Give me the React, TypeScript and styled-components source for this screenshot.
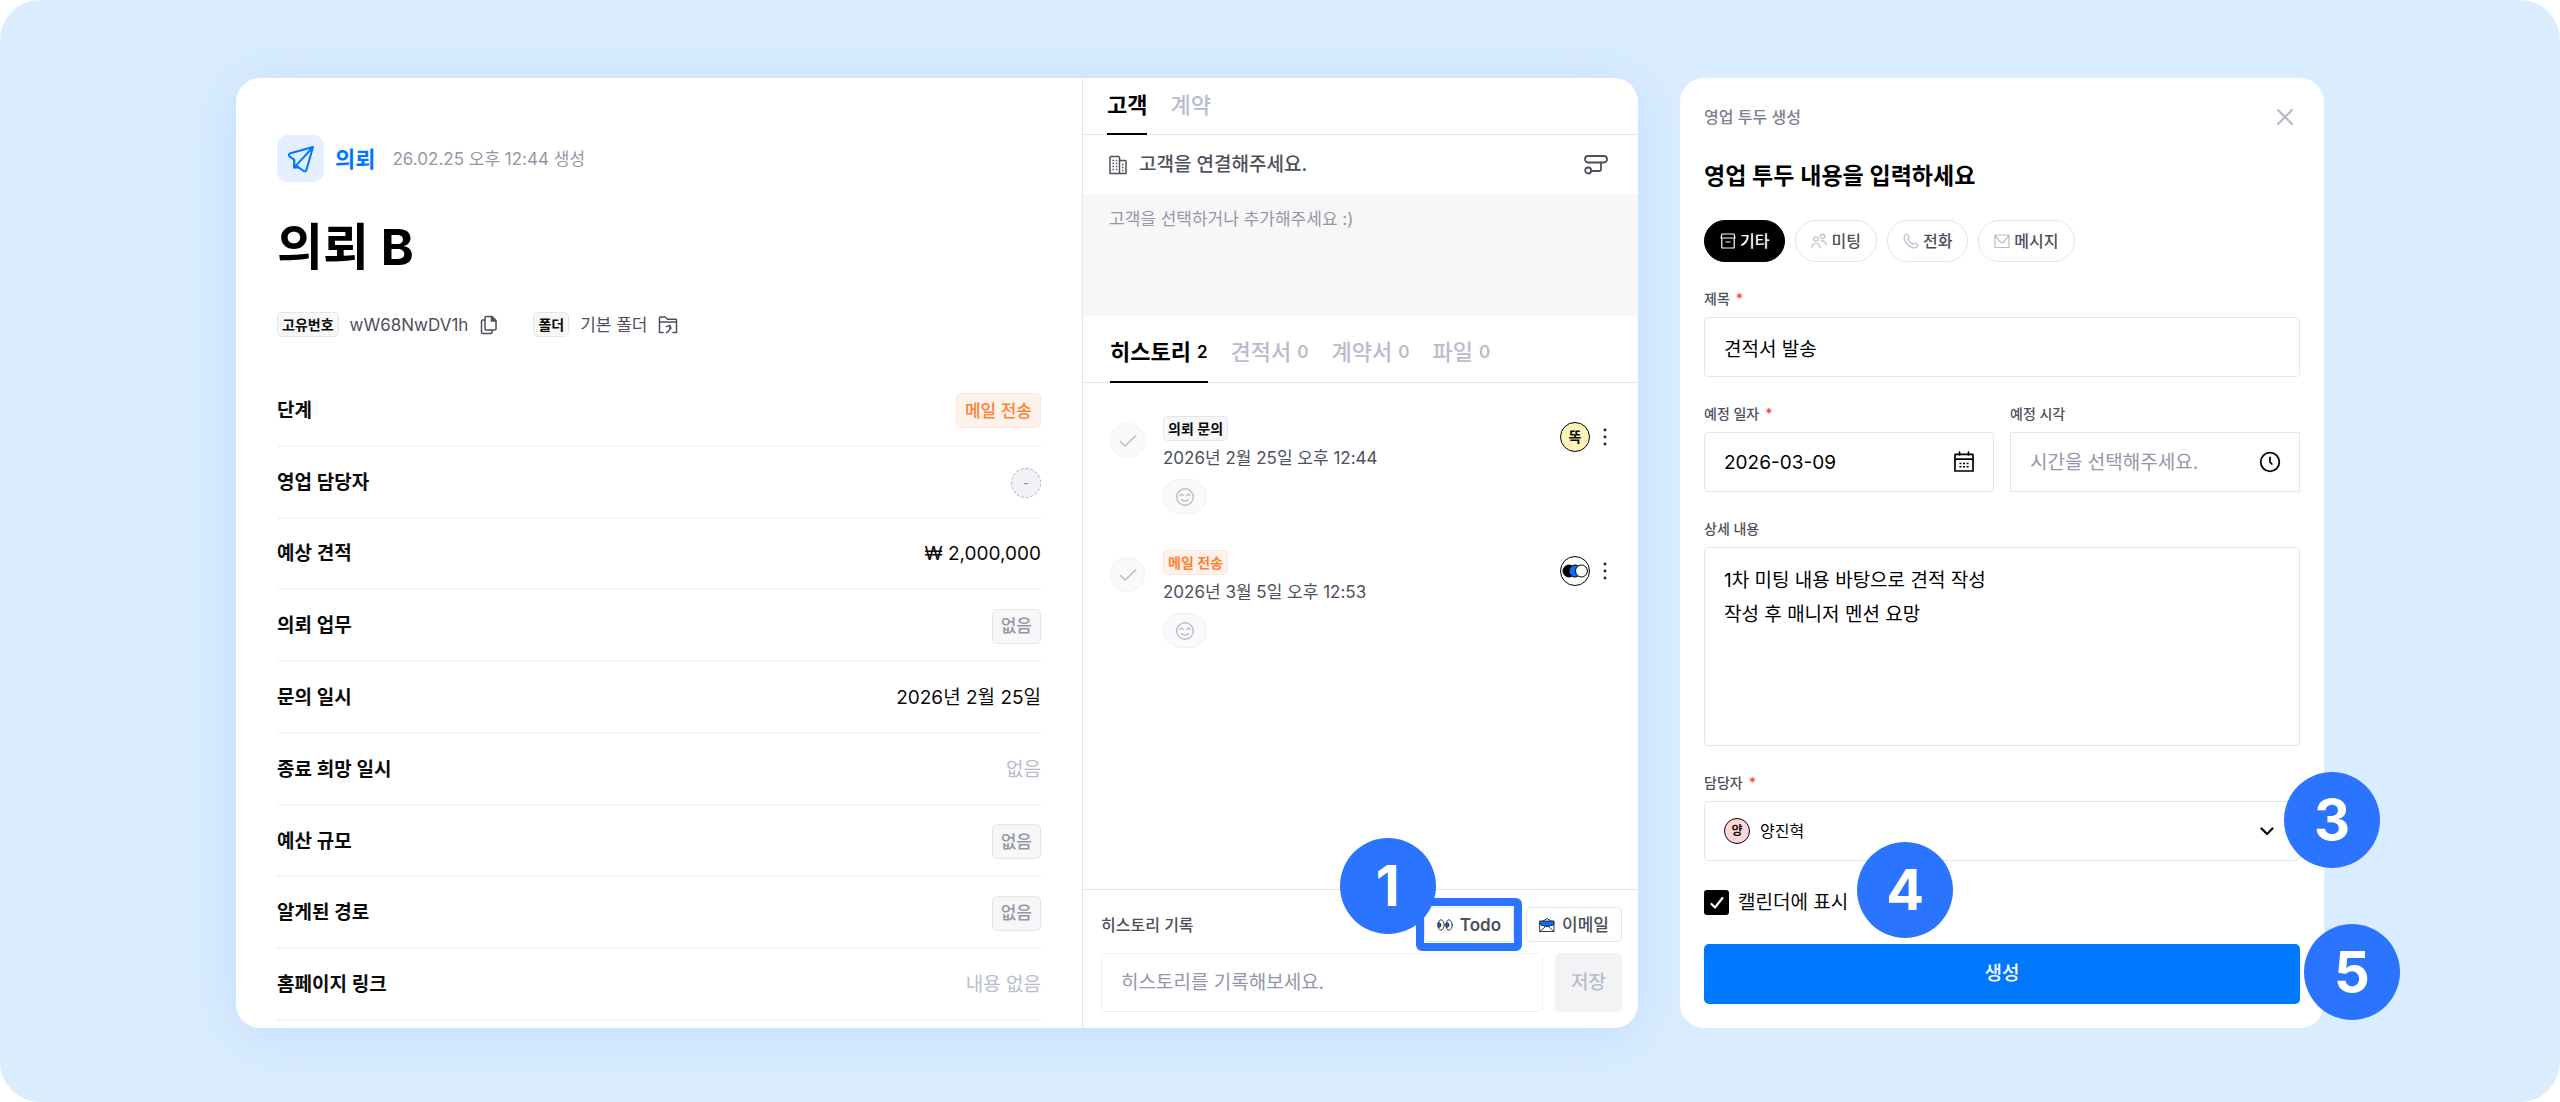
import React from "react";
import styled, { createGlobalStyle, css } from "styled-components";

const color = {
  page: "#daedff",
  badge: "#2b74ff",
  primary: "#0077ff",
  ink: "#0a0a0a",
  body: "#4d505c",
  muted: "#9397a9",
  faint: "#b9bccd",
  line: "#e5e5ef",
  hair: "#f5f5f7",
  soft: "#f7f7f7",
  red: "#ff3b45",
};

const GlobalStyle = createGlobalStyle`
  *, *::before, *::after { box-sizing: border-box; }
  body {
    margin: 0;
    background: #ffffff;
    color: ${color.ink};
    font-family: Inter, "Noto Sans CJK KR", sans-serif;
    font-size: 18px;
    line-height: 24px;
  }
  button, input, select, textarea { font: inherit; color: inherit; margin: 0; }
  button { cursor: pointer; }
  h1, h2, h3, p, dl, dt, dd, ul { margin: 0; padding: 0; }
`;

const Page = styled.div`
  min-height: 100vh;
  display: grid;
  grid-template-columns: minmax(0, 1402fr) minmax(0, 644fr);
  gap: 42px;
  padding: 78px 236px 74px;
  background: ${color.page};
  border-radius: 40px;
`;

const DetailCard = styled.main`
  display: grid;
  grid-template-columns: minmax(0, 846fr) minmax(0, 556fr);
  background: #ffffff;
  border-radius: 24px;
  box-shadow: 0 6px 56px rgba(110, 160, 255, 0.22);
`;

const icon = css`
  flex: none;
  display: block;
  fill: none;
  stroke: currentColor;
  stroke-linecap: round;
  stroke-linejoin: round;
`;

const Icon = styled.svg<{ $size: number; $stroke?: number; $color?: string }>`
  ${icon}
  width: ${(p) => p.$size}px;
  height: ${(p) => p.$size}px;
  stroke-width: ${(p) => p.$stroke ?? 1.5};
  color: ${(p) => p.$color ?? "inherit"};
`;

const IconButton = styled.button`
  display: flex;
  padding: 0;
  border: 0;
  background: none;
  color: ${color.body};
`;

/* Left panel */

const Summary = styled.section`
  display: flex;
  flex-direction: column;
  padding: 57px 41px 7px;
`;

const Kind = styled.div`
  display: flex;
  align-items: center;
  gap: 11px;
`;

const KindIcon = styled.span`
  display: grid;
  place-items: center;
  width: 47px;
  height: 47px;
  border-radius: 11px;
  background: #e5efff;
  color: ${color.primary};
`;

const KindName = styled.strong`
  font-size: 22px;
  font-weight: 600;
  color: ${color.primary};
`;

const Created = styled.span`
  margin-left: 6px;
  font-size: 17px;
  color: ${color.muted};
`;

const Title = styled.h1`
  margin-top: 30px;
  font-size: 50px;
  line-height: 70px;
  font-weight: 700;
  color: #000000;
`;

const Meta = styled.div`
  display: flex;
  align-items: center;
  margin-top: 30px;
  gap: 34px;
`;

const MetaItem = styled.div`
  display: flex;
  align-items: center;
  gap: 11px;
  font-size: 17px;
  color: ${color.body};
`;

const tones = {
  neutral: css`
    color: ${color.ink};
    background: ${color.soft};
    border-color: ${color.line};
  `,
  muted: css`
    color: ${color.muted};
    background: ${color.soft};
    border-color: ${color.line};
  `,
  orange: css`
    color: #ff8033;
    background: #fff2ea;
    border-color: #ffe5d8;
  `,
};
type Tone = keyof typeof tones;

const Tag = styled.span<{ $tone: Tone }>`
  display: inline-flex;
  align-items: center;
  height: 25px;
  padding: 0 4px;
  border: 1px solid;
  border-radius: 5px;
  font-size: 14px;
  line-height: 20px;
  font-weight: 600;
  ${(p) => tones[p.$tone]}
`;

const Chip = styled(Tag)`
  height: 35px;
  padding: 0 8px;
  font-size: 17px;
  font-weight: 500;
`;

const Fields = styled.dl`
  flex: 1;
  display: grid;
  grid-auto-rows: minmax(60px, 1fr);
  margin-top: 38px;
`;

const FieldRow = styled.div`
  display: flex;
  align-items: center;
  justify-content: space-between;
  padding-top: 2px;
  border-bottom: 2px solid ${color.hair};
  font-size: 19px;

  dt {
    font-weight: 600;
  }
`;

const Empty = styled.span`
  color: ${color.faint};
`;

const Unassigned = styled.span`
  display: grid;
  place-items: center;
  width: 30px;
  height: 30px;
  border: 1px dashed #aeb2c4;
  border-radius: 50%;
  background: #f1f2f5;
  font-size: 14px;
  color: ${color.muted};
`;

/* Middle panel */

const Side = styled.section`
  display: flex;
  flex-direction: column;
  border-left: 1px solid ${color.line};
`;

const Tabs = styled.div<{ $tall?: boolean }>`
  display: flex;
  align-items: stretch;
  gap: 23px;
  height: ${(p) => (p.$tall ? 67 : 57)}px;
  padding: 0 ${(p) => (p.$tall ? 27 : 24)}px;
  border-bottom: 1px solid ${color.line};

  button {
    padding: ${(p) => (p.$tall ? "6px 0 0" : "0 0 2px")};
  }
`;

const Tab = styled.button<{ $active?: boolean }>`
  display: flex;
  align-items: center;
  gap: 6px;
  margin-bottom: -1px;
  border: 0;
  border-bottom: 2px solid ${(p) => (p.$active ? "#000000" : "transparent")};
  background: none;
  font-size: 22px;
  font-weight: ${(p) => (p.$active ? 600 : 500)};
  color: ${(p) => (p.$active ? "#000000" : color.faint)};

  small {
    font-size: 17px;
    font-weight: 600;
  }
`;

const ClientBar = styled.div`
  display: flex;
  align-items: center;
  justify-content: space-between;
  height: 59px;
  padding: 0 30px 0 25px;
  color: ${color.body};
`;

const ClientName = styled.h2`
  display: flex;
  align-items: center;
  gap: 11px;
  font-size: 19px;
  font-weight: 500;
`;

const ClientHint = styled.p`
  min-height: 122px;
  padding: 13px 26px;
  background: ${color.soft};
  font-size: 17px;
  color: ${color.muted};
`;

const History = styled.ul`
  flex: 1;
  display: flex;
  flex-direction: column;
  gap: 36px;
  padding: 33px 26px 33px 27px;
  list-style: none;
`;

const HistoryItem = styled.li`
  display: flex;
  align-items: flex-start;
`;

const CheckButton = styled.button`
  display: grid;
  place-items: center;
  width: 35px;
  height: 35px;
  margin-top: 7px;
  padding: 0;
  border: 1px solid #f1f1f4;
  border-radius: 50%;
  background: #fafafa;
  color: ${color.faint};
`;

const HistoryBody = styled.div`
  flex: 1;
  display: flex;
  flex-direction: column;
  align-items: flex-start;
  margin-left: 18px;
`;

const HistoryDate = styled.time`
  margin-top: 5px;
  font-size: 17px;
  color: ${color.body};
`;

const ReactionButton = styled.button`
  display: grid;
  place-items: center;
  width: 44px;
  height: 35px;
  margin-top: 9px;
  padding: 0;
  border: 1px solid #f1f1f4;
  border-radius: 18px;
  background: #fafafa;
  color: ${color.faint};
`;

const Avatar = styled.span<{ $fill: string; $size: number }>`
  display: grid;
  place-items: center;
  width: ${(p) => p.$size}px;
  height: ${(p) => p.$size}px;
  border: 1px solid #000000;
  border-radius: 50%;
  background: ${(p) => p.$fill};
  font-size: ${(p) => (p.$size > 28 ? 14 : 12)}px;
  line-height: 16px;
  font-weight: 600;
  overflow: hidden;
`;

const HistoryActions = styled.div`
  display: flex;
  align-items: center;
  gap: 6px;
  margin: 6px -2px 0 0;
`;

const Composer = styled.form`
  padding: 17px 16px 16px 18px;
  border-top: 1px solid ${color.line};
`;

const ComposerHead = styled.div`
  display: flex;
  align-items: center;
  gap: 12px;

  label {
    margin-right: auto;
    font-size: 16px;
    font-weight: 500;
    color: ${color.body};
  }
`;

const TodoWrap = styled.span`
  position: relative;
  display: flex;
`;

const SmallButton = styled.button`
  display: flex;
  align-items: center;
  gap: 7px;
  height: 35px;
  padding: 0 12px;
  border: 1px solid ${color.line};
  border-radius: 5px;
  background: #ffffff;
  font-size: 17px;
  font-weight: 500;
  color: ${color.body};
`;

const TodoButton = styled(SmallButton)`
  font-weight: 600;
`;

const Highlight = styled.span`
  position: absolute;
  inset: -9px -8px;
  border: 8px solid ${color.badge};
  border-radius: 6px;
  pointer-events: none;
`;

const Step = styled.span<{ $x: string; $y: string }>`
  position: absolute;
  left: ${(p) => p.$x};
  top: ${(p) => p.$y};
  display: grid;
  place-items: center;
  width: 96px;
  height: 96px;
  border-radius: 50%;
  background: ${color.badge};
  color: #ffffff;
  font-size: 56px;
  line-height: 56px;
  font-weight: 700;
  pointer-events: none;
`;

const ComposerRow = styled.div`
  display: flex;
  gap: 12px;
  margin-top: 11px;
  font-size: 19px;

  input {
    flex: 1;
    min-width: 0;
    height: 59px;
    padding: 0 19px;
    border: 1px solid #f0f0f3;
    border-radius: 5px;
    background: #ffffff;
  }

  input::placeholder {
    color: ${color.muted};
  }

  button {
    width: 67px;
    border: 0;
    border-radius: 5px;
    background: #f2f3f5;
    font-weight: 500;
    color: ${color.faint};
  }
`;

/* Right panel */

const TodoCard = styled.form`
  display: flex;
  flex-direction: column;
  padding: 27px 24px 24px;
  background: #ffffff;
  border-radius: 24px;
`;

const TodoHeader = styled.header`
  display: flex;
  align-items: center;
  justify-content: space-between;
  padding-right: 6px;
  font-size: 16px;
  font-weight: 500;
  color: #7c8091;
`;

const TodoTitle = styled.h2`
  margin-top: 30px;
  font-size: 23px;
  line-height: 34px;
  font-weight: 600;
  color: #000000;
`;

const Kinds = styled.div`
  display: flex;
  gap: 10px;
  margin-top: 27px;
`;

const KindChip = styled.button<{ $active?: boolean }>`
  display: flex;
  align-items: center;
  gap: 4px;
  height: 42px;
  padding: 0 15px;
  border: 1px solid ${(p) => (p.$active ? "#000000" : color.line)};
  border-radius: 21px;
  background: ${(p) => (p.$active ? "#000000" : "#ffffff")};
  font-size: 16px;
  font-weight: 500;
  color: ${(p) => (p.$active ? "#ffffff" : color.body)};

  svg {
    color: ${(p) => (p.$active ? "#ffffff" : color.faint)};
  }
`;

const Field = styled.div<{ $grow?: boolean }>`
  display: flex;
  flex-direction: column;
  ${(p) => p.$grow && "flex: 1;"}
  margin-top: 27px;

  label {
    margin-bottom: 8px;
    font-size: 14px;
    line-height: 20px;
    font-weight: 500;
    color: ${color.body};
  }

  em {
    margin-left: 6px;
    font-style: normal;
    color: ${color.red};
  }
`;

const Columns = styled.div`
  display: grid;
  grid-template-columns: 1fr 1fr;
  gap: 16px;
`;

const box = css`
  width: 100%;
  padding: 0 19px;
  border: 1px solid ${color.line};
  border-radius: 4px;
  background: #ffffff;
  font-size: 19px;
  color: #000000;
  outline: 0;
`;

const TextInput = styled.input<{ $square?: boolean }>`
  ${box}
  height: 60px;
  ${(p) => p.$square && "border-radius: 0;"}

  &::placeholder {
    color: ${color.muted};
    opacity: 1;
  }
`;

const TextArea = styled.textarea`
  ${box}
  flex: 1;
  min-height: 120px;
  padding: 16px 19px;
  line-height: 34px;
  resize: none;
`;

const Select = styled.select`
  ${box}
  height: 60px;
  padding-left: 55px;
  font-size: 16px;
  appearance: none;
`;

const Adorned = styled.div`
  position: relative;
`;

const Lead = styled.span`
  position: absolute;
  left: 20px;
  top: 0;
  bottom: 0;
  display: flex;
  align-items: center;
  pointer-events: none;
`;

const Trail = styled.span`
  position: absolute;
  right: 19px;
  top: 0;
  bottom: 0;
  display: flex;
  align-items: center;
  pointer-events: none;
`;

const CheckRow = styled.div`
  position: relative;
  align-self: flex-start;
  display: flex;
  align-items: center;
  gap: 9px;
  margin: 29px 0;

  input {
    flex: none;
    appearance: none;
    width: 25px;
    height: 25px;
    border-radius: 3px;
    background: #000000;
  }

  svg {
    position: absolute;
    left: 3px;
    pointer-events: none;
  }

  label {
    font-size: 19px;
    line-height: 25px;
  }
`;

const SubmitWrap = styled.div`
  position: relative;
`;

const Submit = styled.button`
  width: 100%;
  height: 60px;
  border: 0;
  border-radius: 5px;
  background: ${color.primary};
  font-size: 19px;
  font-weight: 500;
  color: #ffffff;
`;

/* Drawings */

const SendIcon = () => (
  <Icon viewBox="0 0 30 30" $size={30} $stroke={2}>
    <path d="M27 3 L4.5 9.2 Q1.6 10.3 3.7 12.6 L8.2 15.8 V23.6 L10.6 22 L17.4 26.8 Q19.6 28.2 20.5 25.6 L27 3 L8.4 23.4" />
    <path d="M8.2 15.8 V23.6 H13" />
  </Icon>
);

const CopyIcon = () => (
  <Icon viewBox="0 0 18 20" $size={20}>
    <path d="M6 1.5 H12 L16 5.5 V14 Q16 15 15 15 H6 Q5 15 5 14 V2.5 Q5 1.5 6 1.5 Z" />
    <path d="M11.5 1.5 V6 H16 Z" fill="currentColor" />
    <path d="M4.5 5 H2.5 Q1.5 5 1.5 6 V17.5 Q1.5 18.5 2.5 18.5 H11 Q12 18.5 12 17.5 V15.5" />
  </Icon>
);

const FolderIcon = () => (
  <Icon viewBox="0 0 20 20" $size={20}>
    <path d="M5 17.5 H1.5 V2.8 Q1.5 2 2.3 2 H7.2 L9.6 4.2 H17.6 Q18.5 4.2 18.5 5 V17.5 H15" />
    <path d="M1.5 7 H18.5" />
    <path d="M8.5 17.5 C11.5 16.5 12.5 14 11.8 10.5 M8.4 11.6 L11.8 10.4 L13 13.4" />
  </Icon>
);

const BuildingIcon = () => (
  <Icon viewBox="0 0 20 20" $size={20}>
    <path d="M2 18.5 V2.5 Q2 1.5 3 1.5 H10 Q11 1.5 11.5 2.5 V18.5 Z M11.5 5.5 H17 Q18 5.5 18 6.5 V18.5 H11.5" />
    <path strokeDasharray="1.5 1.8" strokeLinecap="butt" d="M4.5 5.5 H10 M4.5 8.5 H10 M4.5 11.5 H10 M4.5 14.5 H10 M14 9.5 H17 M14 12.5 H17 M14 15.5 H17" />
  </Icon>
);

const FlowIcon = () => (
  <Icon viewBox="0 0 24 24" $size={24} $stroke={1.8}>
    <rect x="1" y="3" width="22" height="6.5" rx="3.2" />
    <circle cx="4.2" cy="17.5" r="3" />
    <path d="M7.2 18 H15.5 Q17 18 17 16.5 V9.5" />
  </Icon>
);

const CheckIcon = () => (
  <Icon viewBox="0 0 20 20" $size={20} $stroke={1.6}>
    <path d="M2.5 10.5 L7 15 L17.5 5" />
  </Icon>
);

const SmileIcon = () => (
  <Icon viewBox="0 0 20 20" $size={20} $stroke={1.4}>
    <circle cx="10" cy="10" r="8.3" />
    <path d="M4.8 8.6 Q6.5 6 8.2 8.6 M11.8 8.6 Q13.5 6 15.2 8.6 M6.5 12.6 Q10 15.4 13.5 12.6" />
  </Icon>
);

const DotsIcon = () => (
  <Icon viewBox="0 0 18 18" $size={18} $color="#222222">
    <g fill="currentColor" stroke="none">
      <circle cx="9" cy="2" r="1.4" />
      <circle cx="9" cy="9" r="1.4" />
      <circle cx="9" cy="16" r="1.4" />
    </g>
  </Icon>
);

const CirclesLogo = () => (
  <Icon viewBox="0 0 28 28" $size={28} $stroke={1} $color="#000000">
    <circle cx="8" cy="14" r="6" fill="#000000" />
    <circle cx="14" cy="14" r="6" fill="#0a6cff" />
    <circle cx="20.5" cy="14" r="6" fill="#ffffff" />
  </Icon>
);

const EyesIcon = () => (
  <Icon viewBox="0 0 16 16" $size={16} $stroke={0.9} $color="#222222">
    <ellipse cx="4" cy="8" rx="3.2" ry="5.2" />
    <ellipse cx="12" cy="8" rx="3.2" ry="5.2" />
    <ellipse cx="2.4" cy="8" rx="1.3" ry="2.4" fill="#0a6cff" />
    <ellipse cx="10.4" cy="8" rx="1.3" ry="2.4" fill="#0a6cff" />
  </Icon>
);

const MailOpenIcon = () => (
  <Icon viewBox="0 0 16 16" $size={16} $stroke={0.9} $color="#222222">
    <path d="M1 6 L8 1.5 L15 6 V14.5 H1 Z" fill="#ffffff" />
    <path d="M1 14.5 L6.5 9.5 H9.5 L15 14.5" />
    <path d="M1 4 H15 V7.5 Q13 9 11.5 8.5 Q9.5 10 8 9 Q6 10 4.5 8.5 Q2.5 9 1 7.5 Z" fill="#0a6cff" />
  </Icon>
);

const CloseIcon = () => (
  <Icon viewBox="0 0 18 18" $size={18} $stroke={2} $color="#b3b7c7">
    <path d="M2 2 L16 16 M16 2 L2 16" />
  </Icon>
);

const BoxIcon = () => (
  <Icon viewBox="0 0 16 16" $size={16} $stroke={1.2}>
    <path d="M2 1 H14 L15 5 H1 Z M1.8 5 V15 H14.2 V5 M6 9 H10" />
  </Icon>
);

const PeopleIcon = () => (
  <Icon viewBox="0 0 16 16" $size={16} $stroke={1.2}>
    <circle cx="5" cy="6" r="2.2" />
    <circle cx="11.5" cy="3.5" r="2.2" />
    <path d="M1 15 Q1 10.5 5 10.5 Q9 10.5 9 15 M10 8 Q15 7.4 15 12" />
  </Icon>
);

const PhoneIcon = () => (
  <Icon viewBox="0 0 16 16" $size={16} $stroke={1.2}>
    <path d="M3 1.2 Q0.4 2.6 1.4 6.2 Q3.4 12.4 9.6 14.6 Q13.4 15.6 15 12.6 Q15 11.6 12.4 10 Q11.4 9.8 10.2 11.4 Q6.4 10 4.8 6 Q6.4 4.8 5.9 3.6 Q4.4 0.8 3 1.2 Z" />
  </Icon>
);

const EnvelopeIcon = () => (
  <Icon viewBox="0 0 16 16" $size={16} $stroke={1.2}>
    <path d="M1 2 H15 V14.5 H1 Z M1 2.5 L6.4 9 Q8 10.4 9.6 9 L15 2.5" />
  </Icon>
);

const CalendarIcon = () => (
  <Icon viewBox="0 0 22 22" $size={22} $stroke={1.7} $color="#000000">
    <path d="M2 4 Q2 3.4 2.6 3.4 H19.4 Q20 3.4 20 4 V20 H2 Z M2 8.2 H20 M6.5 1.2 V4 M15.5 1.2 V4" />
    <path strokeWidth="1.5" strokeDasharray="2 1.6" strokeLinecap="butt" d="M6.4 12.4 H15.6 M6.4 15.8 H15.6" />
  </Icon>
);

const ClockIcon = () => (
  <Icon viewBox="0 0 22 22" $size={22} $stroke={1.8} $color="#000000">
    <circle cx="11" cy="11" r="9.3" />
    <path d="M11 6.5 V11 L12.8 13" />
  </Icon>
);

const ChevronIcon = () => (
  <Icon viewBox="0 0 28 28" $size={28} $stroke={2.2} $color="#000000">
    <path d="M8.5 11.5 L14 17 L19.5 11.5" />
  </Icon>
);

const TickIcon = () => (
  <Icon viewBox="0 0 20 20" $size={20} $stroke={2.2} $color="#ffffff">
    <path d="M4.5 11 L8 14.5 L15.5 5" />
  </Icon>
);

const NoneChip = () => <Chip $tone="muted">없음</Chip>;

const fields: { name: string; value: React.ReactNode }[] = [
  { name: "단계", value: <Chip $tone="orange">메일 전송</Chip> },
  { name: "영업 담당자", value: <Unassigned>-</Unassigned> },
  { name: "예상 견적", value: "₩ 2,000,000" },
  { name: "의뢰 업무", value: <NoneChip /> },
  { name: "문의 일시", value: "2026년 2월 25일" },
  { name: "종료 희망 일시", value: <Empty>없음</Empty> },
  { name: "예산 규모", value: <NoneChip /> },
  { name: "알게된 경로", value: <NoneChip /> },
  { name: "홈페이지 링크", value: <Empty>내용 없음</Empty> },
];

const history: { tag: string; tone: Tone; date: string; avatar: React.ReactNode }[] = [
  {
    tag: "의뢰 문의",
    tone: "neutral",
    date: "2026년 2월 25일 오후 12:44",
    avatar: <Avatar $fill="#fff4b8" $size={30}>똑</Avatar>,
  },
  {
    tag: "메일 전송",
    tone: "orange",
    date: "2026년 3월 5일 오후 12:53",
    avatar: <Avatar $fill="#ffffff" $size={30}><CirclesLogo /></Avatar>,
  },
];

const kinds = [
  { name: "기타", icon: <BoxIcon />, active: true },
  { name: "미팅", icon: <PeopleIcon /> },
  { name: "전화", icon: <PhoneIcon /> },
  { name: "메시지", icon: <EnvelopeIcon /> },
];

export default function App() {
  return (
    <>
      <GlobalStyle />
      <Page>
        <DetailCard>
          <Summary>
            <Kind>
              <KindIcon><SendIcon /></KindIcon>
              <KindName>의뢰</KindName>
              <Created>26.02.25 오후 12:44 생성</Created>
            </Kind>
            <Title>의뢰 B</Title>
            <Meta>
              <MetaItem>
                <Tag $tone="neutral">고유번호</Tag>
                wW68NwDV1h
                <IconButton type="button" aria-label="복사"><CopyIcon /></IconButton>
              </MetaItem>
              <MetaItem>
                <Tag $tone="neutral">폴더</Tag>
                기본 폴더
                <IconButton type="button" aria-label="폴더 이동"><FolderIcon /></IconButton>
              </MetaItem>
            </Meta>
            <Fields>
              {fields.map((f) => (
                <FieldRow key={f.name}>
                  <dt>{f.name}</dt>
                  <dd>{f.value}</dd>
                </FieldRow>
              ))}
            </Fields>
          </Summary>

          <Side>
            <Tabs>
              <Tab type="button" $active>고객</Tab>
              <Tab type="button">계약</Tab>
            </Tabs>
            <ClientBar>
              <ClientName><BuildingIcon />고객을 연결해주세요.</ClientName>
              <IconButton type="button" aria-label="연결"><FlowIcon /></IconButton>
            </ClientBar>
            <ClientHint>고객을 선택하거나 추가해주세요 :)</ClientHint>
            <Tabs $tall>
              <Tab type="button" $active>히스토리 <small>2</small></Tab>
              <Tab type="button">견적서 <small>0</small></Tab>
              <Tab type="button">계약서 <small>0</small></Tab>
              <Tab type="button">파일 <small>0</small></Tab>
            </Tabs>
            <History>
              {history.map((h) => (
                <HistoryItem key={h.tag}>
                  <CheckButton type="button" aria-label="완료"><CheckIcon /></CheckButton>
                  <HistoryBody>
                    <Tag $tone={h.tone}>{h.tag}</Tag>
                    <HistoryDate>{h.date}</HistoryDate>
                    <ReactionButton type="button" aria-label="반응 추가"><SmileIcon /></ReactionButton>
                  </HistoryBody>
                  <HistoryActions>
                    {h.avatar}
                    <IconButton type="button" aria-label="더보기"><DotsIcon /></IconButton>
                  </HistoryActions>
                </HistoryItem>
              ))}
            </History>
            <Composer>
              <ComposerHead>
                <label htmlFor="record">히스토리 기록</label>
                <TodoWrap>
                  <TodoButton type="button"><EyesIcon />Todo</TodoButton>
                  <Highlight />
                  <Step $x="-84px" $y="-69px">1</Step>
                </TodoWrap>
                <SmallButton type="button"><MailOpenIcon />이메일</SmallButton>
              </ComposerHead>
              <ComposerRow>
                <input id="record" placeholder="히스토리를 기록해보세요." />
                <button type="button">저장</button>
              </ComposerRow>
            </Composer>
          </Side>
        </DetailCard>

        <TodoCard>
          <TodoHeader>
            영업 투두 생성
            <IconButton type="button" aria-label="닫기"><CloseIcon /></IconButton>
          </TodoHeader>
          <TodoTitle>영업 투두 내용을 입력하세요</TodoTitle>
          <Kinds>
            {kinds.map((k) => (
              <KindChip key={k.name} type="button" $active={k.active}>
                {k.icon}
                {k.name}
              </KindChip>
            ))}
          </Kinds>
          <Field>
            <label htmlFor="title">제목<em>*</em></label>
            <TextInput id="title" defaultValue="견적서 발송" />
          </Field>
          <Columns>
            <Field>
              <label htmlFor="date">예정 일자<em>*</em></label>
              <Adorned>
                <TextInput id="date" defaultValue="2026-03-09" />
                <Trail><CalendarIcon /></Trail>
              </Adorned>
            </Field>
            <Field>
              <label htmlFor="time">예정 시각</label>
              <Adorned>
                <TextInput id="time" $square placeholder="시간을 선택해주세요." />
                <Trail><ClockIcon /></Trail>
              </Adorned>
            </Field>
          </Columns>
          <Field $grow>
            <label htmlFor="detail">상세 내용</label>
            <TextArea id="detail" defaultValue={"1차 미팅 내용 바탕으로 견적 작성\n작성 후 매니저 멘션 요망"} />
          </Field>
          <Field>
            <label htmlFor="owner">담당자<em>*</em></label>
            <Adorned>
              <Select id="owner"><option>양진혁</option></Select>
              <Lead><Avatar $fill="#ffd6d6" $size={26}>양</Avatar></Lead>
              <Trail><ChevronIcon /></Trail>
              <Step $x="calc(100% - 16px)" $y="-29px">3</Step>
            </Adorned>
          </Field>
          <CheckRow>
            <input id="calendar" type="checkbox" defaultChecked />
            <TickIcon />
            <label htmlFor="calendar">캘린더에 표시</label>
            <Step $x="calc(100% + 9px)" $y="-48px">4</Step>
          </CheckRow>
          <SubmitWrap>
            <Submit type="button">생성</Submit>
            <Step $x="calc(100% + 4px)" $y="-20px">5</Step>
          </SubmitWrap>
        </TodoCard>
      </Page>
    </>
  );
}
